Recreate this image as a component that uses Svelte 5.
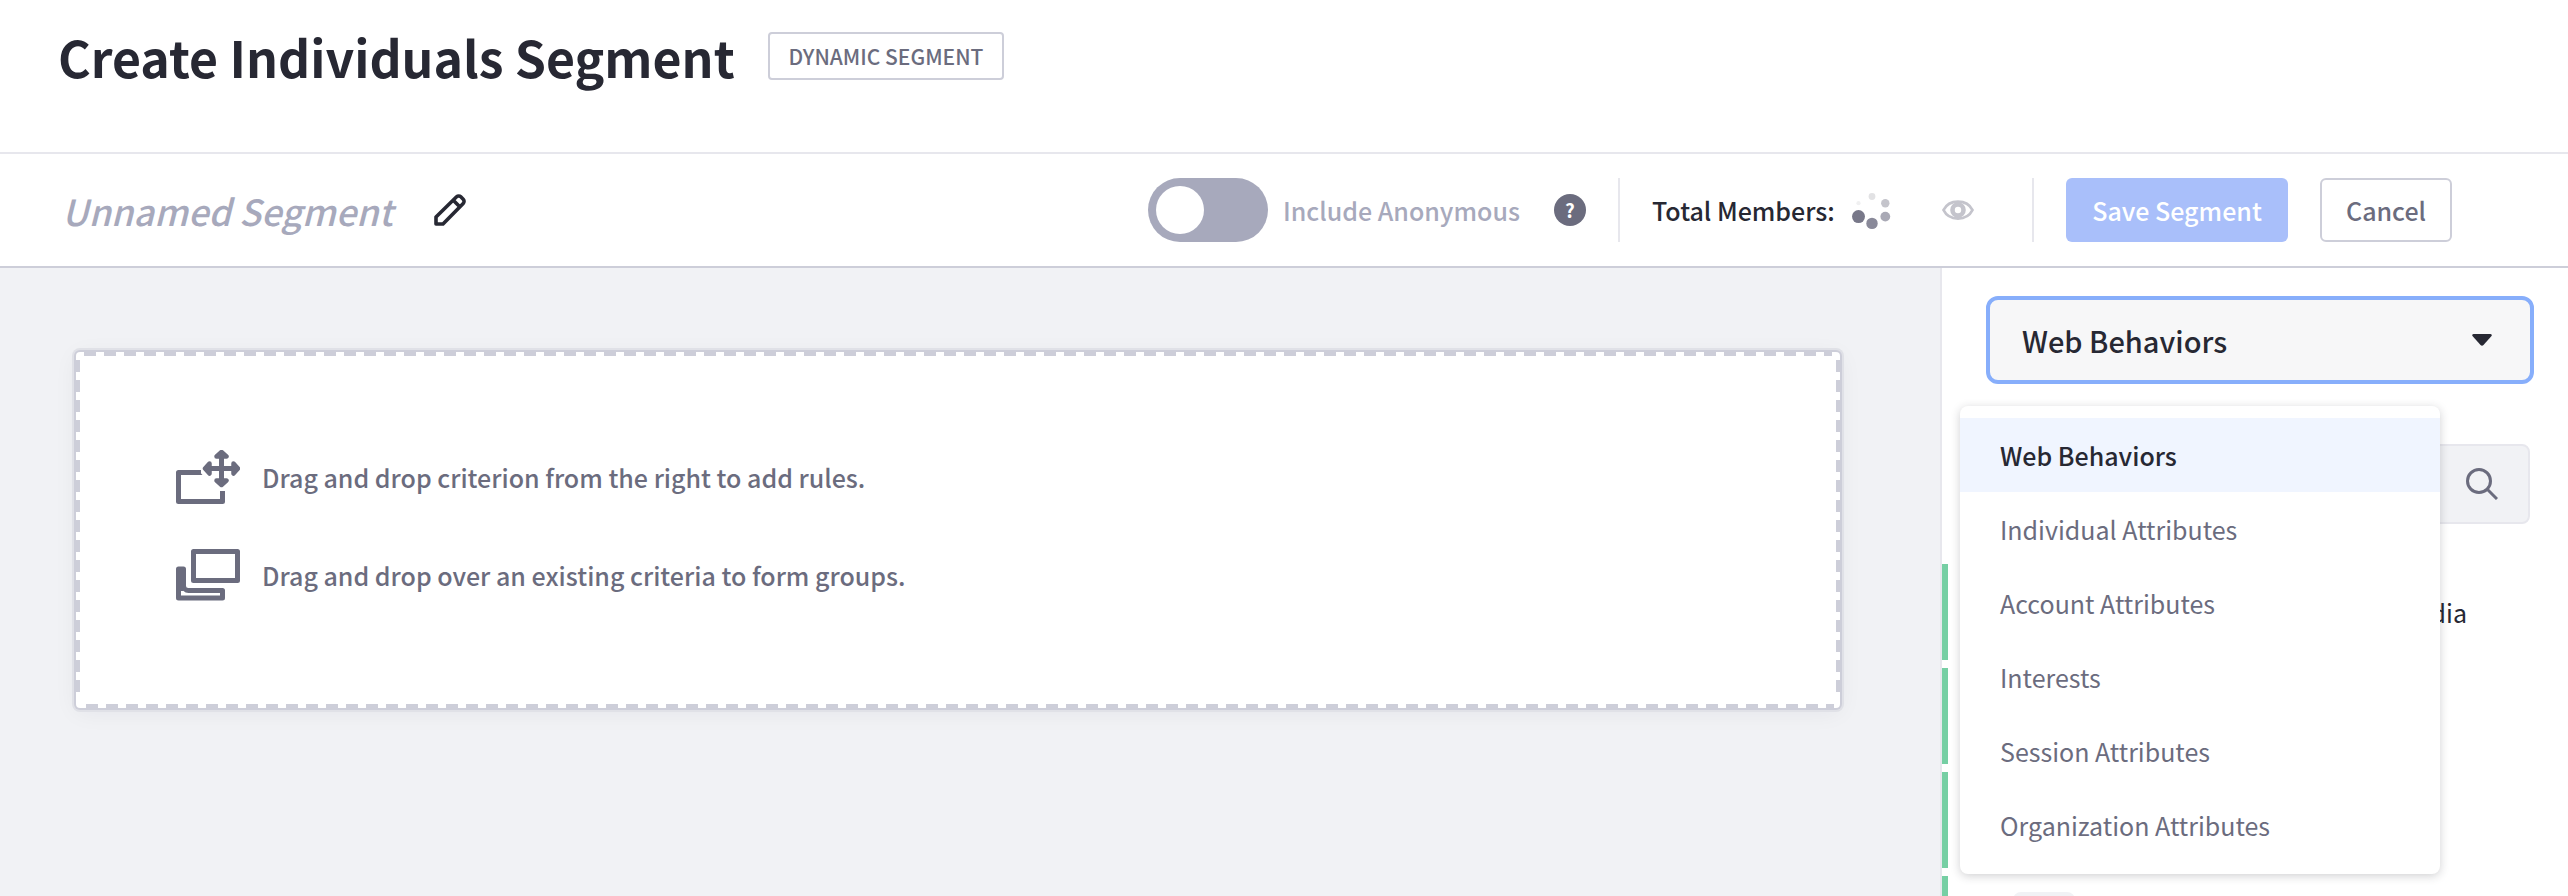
<script>
  const options = ['Web Behaviors', 'Individual Attributes', 'Account Attributes', 'Interests', 'Session Attributes', 'Organization Attributes'];
  const selected = 'Web Behaviors';
  const dots = [
    [20, 6.5, 3.4, '#e2e2e4'], [33.3, 13.2, 4.2, '#c4c4cb'], [33.3, 26.6, 4.9, '#a9a9b5'],
    [20, 33.4, 5.7, '#898999'], [6.5, 26.6, 6.5, '#787889'], [6.5, 13.2, 2.1, '#f0f0f1']
  ];
</script>

<div class="page">
  <header>
    <h1>Create Individuals Segment</h1>
    <span class="badge">DYNAMIC SEGMENT</span>
  </header>

  <div class="toolbar">
    <span class="name">Unnamed Segment</span>
    <svg class="pencil" width="32" height="32" viewBox="0 0 32 32" fill="none" stroke="#272833" stroke-width="3.6" stroke-linejoin="round">
      <path d="M2 30v-7L22.6 2.8a3 3 0 0 1 4.2 0l2.4 2.4a3 3 0 0 1 0 4.2L9 30zM19.5 6.5l6 6" />
    </svg>
    <span class="toggle"><i></i></span>
    <span class="anon">Include Anonymous</span>
    <span class="help">?</span>
    <span class="rule r1"></span>
    <span class="total">Total Members:</span>
    <svg class="spin" width="40" height="40" viewBox="0 0 40 40">
      {#each dots as [x, y, r, c]}<circle cx={x} cy={y} {r} fill={c} />{/each}
    </svg>
    <svg class="eye" width="32" height="20" viewBox="0 0 32 20" fill="none" stroke="#c4c4cc">
      <path d="M1.5 10C7 -1.300 25 -1.300 30.500 10C25 21.300 7 21.300 1.500 10z" stroke-width="2.800" />
      <circle cx="16" cy="10" r="5.500" stroke-width="4.600" />
    </svg>
    <span class="rule r2"></span>
    <button class="save">Save Segment</button>
    <button class="cancel">Cancel</button>
  </div>

  <div class="body">
    <main>
      <section class="drop">
        <div class="hint">
          <svg width="64" height="54" viewBox="0 0 64 54" fill="none" stroke="#6b6c7e">
            <path d="M25 22.500H2.500V51.500H46.500V41" stroke-width="5" stroke-linejoin="round" />
            <path d="M20 20H22L26.500 25H20z" fill="#6b6c7e" stroke="none" />
            <path d="M45.500 4V33M31 18.500H60" stroke-width="5" />
            <path d="M40.500 6.500L45.500 2L50.500 6.500zM40.500 30.500L45.500 35L50.500 30.500zM33.500 13.500L29 18.500L33.500 23.500zM57.500 13.500L62 18.500L57.500 23.500z" fill="#6b6c7e" stroke-width="4.500" stroke-linejoin="round" transform="translate(0 0)" />
          </svg>
          <span>Drag and drop criterion from the right to add rules.</span>
        </div>
        <div class="hint">
          <svg width="64" height="52" viewBox="0 0 64 52" fill="none" stroke="#6b6c7e" stroke-width="5" stroke-linejoin="round">
            <path d="M17.500 2.500h44v29h-44z" />
            <path d="M7.500 20v16.500a5 5 0 0 0 5 5h34v7.500h-44V20z" />
            <path d="M5 18v24" />
          </svg>
          <span>Drag and drop over an existing criteria to form groups.</span>
        </div>
      </section>
    </main>

    <aside>
      <div class="select">
        <span>Web Behaviors</span>
        <svg width="20" height="12" viewBox="0 0 20 12"><path d="M1.500 0h17q2 .5 1 2l-8 9q-1.500 1.500-3 0l-8-9q-1-1.500 1-2z" fill="#272833" /></svg>
      </div>
      <div class="search">
        <svg width="32" height="32" viewBox="0 0 32 32" fill="none" stroke="#6b6c7e" stroke-width="3"><circle cx="13" cy="13" r="11.500" /><path d="M21 21l10 10" /></svg>
      </div>
      <ul class="criteria">
        <li><span>Downloaded Document &amp; Media</span></li>
        <li></li>
        <li></li>
        <li><b class="chip"></b></li>
      </ul>
      <div class="menu">
        {#each options as option}
          <div class="option" class:active={option === selected}>{option}</div>
        {/each}
      </div>
    </aside>
  </div>
</div>

<style>
  :global(body) { background: #fff; overflow: hidden; }
  .page {
    width: 2568px; height: 896px; display: flex; flex-direction: column; overflow: hidden;
    background: #fff; color: #272833; font-family: "Noto Sans CJK SC", "Source Sans Pro", sans-serif; font-size: 25px;
    box-sizing: border-box;
  }
  .page :global(*) { box-sizing: border-box; }
  span, .option, button { white-space: nowrap; }
  header { height: 154px; flex: none; display: flex; align-items: flex-start; padding: 32px 0 0 58px; border-bottom: 2px solid #e7e7ed; }
  h1 { margin: 0; width: 710px; font-size: 50px; line-height: 48px; font-weight: 700; white-space: nowrap; }
  .badge { width: 236px; height: 48px; border: 2px solid #cdced9; border-radius: 4px; color: #6b6c7e; font-size: 21px; font-weight: 500; line-height: 44px; text-align: center; }
  .toolbar { height: 114px; flex: none; display: flex; align-items: center; border-bottom: 2px solid #cdced9; padding-left: 62px; font-weight: 500; }
  .toolbar > * { flex: none; }
  .name { width: 372px; font-size: 36px; font-style: italic; color: #a7a9bc; line-height: 48px; }
  .toggle { width: 120px; height: 64px; border-radius: 32px; background: #a7a9bc; margin-left: 682px; padding: 8px; display: flex; }
  .toggle i { width: 48px; height: 48px; border-radius: 50%; background: #fff; }
  .anon { width: 271px; margin-left: 15px; color: #a7a9bc; }
  .help { width: 32px; height: 32px; border-radius: 50%; background: #6b6c7e; color: #fff; font-weight: 700; font-size: 19px; line-height: 31px; text-align: center; }
  .rule { width: 2px; height: 64px; background: #e7e7ed; }
  .r1 { margin-left: 32px; }
  .total { margin-left: 32px; width: 200px; }
  .eye { margin-left: 50px; }
  .r2 { margin-left: 58px; }
  button { height: 64px; padding: 0; border-radius: 6px; font: inherit; }
  .save { width: 222px; margin-left: 32px; border: 0; background: #a9bffa; color: #fff; }
  .cancel { width: 132px; margin-left: 32px; border: 2px solid #cdced9; background: #fff; color: #6b6c7e; }
  .body { flex: 1; min-height: 0; display: flex; }
  main { width: 1940px; background: #f1f2f5; padding: 84px 0 0 76px; }
  .drop {
    width: 1764px; height: 356px; border-radius: 4px; padding: 98px 0 0 100px; display: flex; flex-direction: column; gap: 44px;
    background-color: #fff; box-shadow: 0 0 0 2px #cdced9, 0 0 0 4px #e0e1e7, 0 4px 24px rgba(39, 40, 51, .06);
    background-image:
      repeating-linear-gradient(90deg, #cdced9 0 12px, transparent 12px 20px),
      repeating-linear-gradient(90deg, #cdced9 0 12px, transparent 12px 20px),
      repeating-linear-gradient(180deg, #cdced9 0 12px, transparent 12px 20px),
      repeating-linear-gradient(180deg, #cdced9 0 12px, transparent 12px 20px);
    background-repeat: no-repeat;
    background-size: 1748px 4px, 1748px 4px, 4px 340px, 4px 340px;
    background-position: 8px 0, 10px 352px, 0 8px, 1760px 8px;
  }
  .hint { height: 54px; display: flex; align-items: center; gap: 22px; color: #6b6c7e; font-weight: 500; }
  aside { position: relative; flex: 1; border-left: 2px solid #e7e7ed; background: #fff; padding: 28px 0 0 44px; }
  .select { width: 548px; height: 88px; border: 4px solid #87aefb; border-radius: 12px; background: #f7f7f8; display: flex; align-items: center; justify-content: space-between; padding: 0 38px 0 32px; font-size: 29px; font-weight: 500; }
  .search { width: 540px; height: 80px; margin-top: 60px; margin-left: 4px; border: 2px solid #e7e7ed; border-radius: 8px; background: #f1f2f5; display: flex; align-items: center; justify-content: flex-end; padding-right: 30px; }
  .criteria { list-style: none; margin: 40px 0 0 -44px; padding: 0; display: flex; flex-direction: column; gap: 8px; }
  li { height: 96px; border-left: 6px solid #76cfa4; display: flex; align-items: center; }
  li span { width: 519px; text-align: right; }
  .chip { width: 62px; height: 64px; margin-left: 65px; border-radius: 8px; background: #f1f2f5; }
  .menu { position: absolute; left: 18px; top: 138px; width: 480px; height: 468px; padding-top: 12px; border-radius: 8px; background: #fff; box-shadow: 0 2px 10px rgba(39, 40, 51, .22); }
  .option { height: 74px; padding-left: 40px; line-height: 74px; color: #6b6c7e; }
  .active { background: #f0f5ff; color: #272833; font-weight: 500; }
</style>
